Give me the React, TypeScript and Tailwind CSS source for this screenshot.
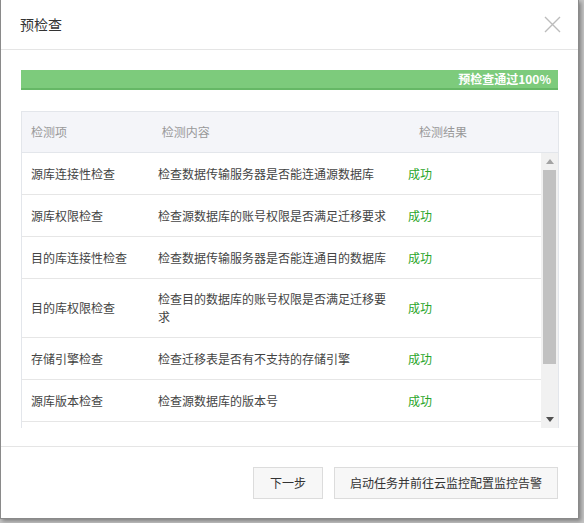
import React from "react";

interface CheckRow {
  item: string;
  content: string;
  result: string;
}

const ROWS: CheckRow[] = [
  { item: "源库连接性检查", content: "检查数据传输服务器是否能连通源数据库", result: "成功" },
  { item: "源库权限检查", content: "检查源数据库的账号权限是否满足迁移要求", result: "成功" },
  { item: "目的库连接性检查", content: "检查数据传输服务器是否能连通目的数据库", result: "成功" },
  { item: "目的库权限检查", content: "检查目的数据库的账号权限是否满足迁移要求", result: "成功" },
  { item: "存储引擎检查", content: "检查迁移表是否有不支持的存储引擎", result: "成功" },
  { item: "源库版本检查", content: "检查源数据库的版本号", result: "成功" },
];

export default function App() {
  return (
    <div
      className="w-[584px] h-[523px] overflow-hidden bg-[#c4c4c4]"
      style={{ fontFamily: '"Noto Sans CJK SC", "Noto Sans", sans-serif' }}
    >
      <div className="w-[579px] h-[519px] bg-white border-l border-r border-b border-[#8a8a8a] shadow-[2px_2px_4px_rgba(0,0,0,0.35)] flex flex-col">
        {/* header */}
        <div className="h-[50px] border-b border-[#e5e5e5] flex items-center justify-between pl-[19px] pr-[17px] shrink-0">
          <span className="text-[14px] text-[#333]">预检查</span>
          <svg width="17" height="17" viewBox="0 0 17 17" className="text-[#bcbcbc]">
            <path d="M1 1L16 16M16 1L1 16" stroke="currentColor" strokeWidth="1.4" fill="none" />
          </svg>
        </div>

        <div className="px-[20px] pt-[20px] flex-1 flex flex-col">
          {/* progress */}
          <div className="h-[20px] bg-[#7dcb7c] border-b-2 border-[#66b866] flex items-center justify-end pr-[7px]">
            <span className="text-[12px] font-semibold text-white leading-none">预检查通过100%</span>
          </div>

          {/* table */}
          <div className="mt-[21px] border-l border-r border-t border-[#e3e6eb] w-[538px]">
            <div className="h-[41px] bg-[#f4f5f9] border-b border-[#e3e6eb] grid grid-cols-[24.4%_48%_27.6%] items-center text-[12px] text-[#999]">
              <span className="pl-[9px]">检测项</span>
              <span className="pl-[9px]">检测内容</span>
              <span className="pl-[9px]">检测结果</span>
            </div>
            <div className="h-[275px] flex">
              <div className="flex-1 overflow-hidden">
                {ROWS.map((r) => (
                  <div
                    key={r.item}
                    className={`grid grid-cols-[127px_250px_1fr] items-center border-b border-[#e6e6e6] text-[12px] text-[#444] ${
                      r.content.length > 19 ? "h-[59px]" : "h-[42px]"
                    }`}
                  >
                    <span className="pl-[9px]">{r.item}</span>
                    <span className="pl-[9px] pr-[8px] leading-[18px]">{r.content}</span>
                    <span className="pl-[9px] text-[#2aa52a]">{r.result}</span>
                  </div>
                ))}
              </div>
              {/* scrollbar */}
              <div className="w-[17px] bg-[#f1f1f1] flex flex-col items-center">
                <div className="h-[17px] flex items-center justify-center">
                  <svg width="8" height="5" viewBox="0 0 8 5">
                    <path d="M0 5L4 0L8 5Z" fill="#a3a3a3" />
                  </svg>
                </div>
                <div className="w-[13px] h-[194px] bg-[#c1c1c1]" />
                <div className="flex-1" />
                <div className="h-[17px] flex items-center justify-center">
                  <svg width="8" height="5" viewBox="0 0 8 5">
                    <path d="M0 0L8 0L4 5Z" fill="#505050" />
                  </svg>
                </div>
              </div>
            </div>
          </div>
        </div>

        {/* footer */}
        <div className="h-[72px] border-t border-[#e5e5e5] flex items-center justify-end gap-[11px] pr-[20px] shrink-0">
          <button className="h-[32px] w-[70px] bg-[#f7f7f7] border border-[#dcdcdc] text-[12px] text-[#333]">
            下一步
          </button>
          <button className="h-[32px] w-[224px] bg-[#f7f7f7] border border-[#dcdcdc] text-[12px] text-[#333]">
            启动任务并前往云监控配置监控告警
          </button>
        </div>
      </div>
    </div>
  );
}
